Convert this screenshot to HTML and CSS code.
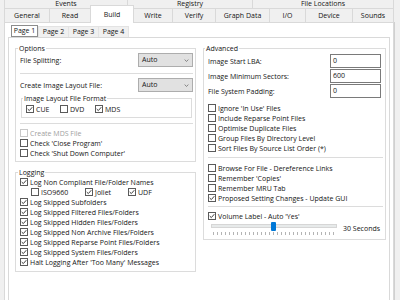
FILE: index.html
```html
<!DOCTYPE html>
<html>
<head>
<meta charset="utf-8">
<link rel="stylesheet" href="styles.css">
</head>
<body>
<div class="win">
  <div class="tabs1">
    <div class="t1 w-ev">Events</div>
    <div class="t1 w-reg">Registry</div>
    <div class="t1 w-fl">File Locations</div>
  </div>
  <div class="tabs2">
    <div class="t2 w-gen">General</div>
    <div class="t2 w-read">Read</div>
    <div class="t2 w-build sel">Build</div>
    <div class="t2 w-write">Write</div>
    <div class="t2 w-ver">Verify</div>
    <div class="t2 w-graph">Graph Data</div>
    <div class="t2 w-io">I/O</div>
    <div class="t2 w-dev">Device</div>
    <div class="t2 w-snd">Sounds</div>
  </div>
  <div class="panel">
    <div class="ptabs">
      <div class="pt psel">Page 1</div>
      <div class="pt">Page 2</div>
      <div class="pt">Page 3</div>
      <div class="pt">Page 4</div>
    </div>
    <div class="page">
      <div class="cols">
        <div class="col col-left">
          <fieldset class="grp">
            <legend>Options</legend>
            <div class="frow"><span>File Splitting:</span><div class="combo">Auto<svg class="chev" viewBox="0 0 6 4"><path d="M0.5 0.8 L3 3.2 L5.5 0.8"/></svg></div></div>
            <div class="sep"></div>
            <div class="frow"><span>Create Image Layout File:</span><div class="combo">Auto<svg class="chev" viewBox="0 0 6 4"><path d="M0.5 0.8 L3 3.2 L5.5 0.8"/></svg></div></div>
            <fieldset class="sub">
              <legend>Image Layout File Format</legend>
              <div class="cbrow">
                <div class="ck w-cue"><span class="cb"><svg viewBox="0 0 6 6"><path d="M0.7 3 L2.3 4.6 L5.3 1.2"/></svg></span>CUE</div>
                <div class="ck w-dvd"><span class="cb"></span>DVD</div>
                <div class="ck"><span class="cb"><svg viewBox="0 0 6 6"><path d="M0.7 3 L2.3 4.6 L5.3 1.2"/></svg></span>MDS</div>
              </div>
            </fieldset>
            <div class="sep sep2"></div>
            <div class="ck dis"><span class="cb"></span>Create MDS File</div>
            <div class="ck"><span class="cb"></span>Check 'Close Program'</div>
            <div class="ck"><span class="cb"></span>Check 'Shut Down Computer'</div>
          </fieldset>
          <fieldset class="grp log">
            <legend>Logging</legend>
            <div class="ck"><span class="cb"><svg viewBox="0 0 6 6"><path d="M0.7 3 L2.3 4.6 L5.3 1.2"/></svg></span>Log Non Compliant File/Folder Names</div>
            <div class="cbrow indent">
              <div class="ck w-iso"><span class="cb"></span>ISO9660</div>
              <div class="ck w-jol"><span class="cb"><svg viewBox="0 0 6 6"><path d="M0.7 3 L2.3 4.6 L5.3 1.2"/></svg></span>Joliet</div>
              <div class="ck"><span class="cb"><svg viewBox="0 0 6 6"><path d="M0.7 3 L2.3 4.6 L5.3 1.2"/></svg></span>UDF</div>
            </div>
            <div class="ck"><span class="cb"><svg viewBox="0 0 6 6"><path d="M0.7 3 L2.3 4.6 L5.3 1.2"/></svg></span>Log Skipped Subfolders</div>
            <div class="ck"><span class="cb"><svg viewBox="0 0 6 6"><path d="M0.7 3 L2.3 4.6 L5.3 1.2"/></svg></span>Log Skipped Filtered Files/Folders</div>
            <div class="ck"><span class="cb"><svg viewBox="0 0 6 6"><path d="M0.7 3 L2.3 4.6 L5.3 1.2"/></svg></span>Log Skipped Hidden Files/Folders</div>
            <div class="ck"><span class="cb"><svg viewBox="0 0 6 6"><path d="M0.7 3 L2.3 4.6 L5.3 1.2"/></svg></span>Log Skipped Non Archive Files/Folders</div>
            <div class="ck"><span class="cb"><svg viewBox="0 0 6 6"><path d="M0.7 3 L2.3 4.6 L5.3 1.2"/></svg></span>Log Skipped Reparse Point Files/Folders</div>
            <div class="ck"><span class="cb"><svg viewBox="0 0 6 6"><path d="M0.7 3 L2.3 4.6 L5.3 1.2"/></svg></span>Log Skipped System Files/Folders</div>
            <div class="ck"><span class="cb"><svg viewBox="0 0 6 6"><path d="M0.7 3 L2.3 4.6 L5.3 1.2"/></svg></span>Halt Logging After 'Too Many' Messages</div>
          </fieldset>
        </div>
        <div class="col col-right">
          <fieldset class="grp adv">
            <legend>Advanced</legend>
            <div class="irow"><span>Image Start LBA:</span><div class="inp">0</div></div>
            <div class="irow"><span>Image Minimum Sectors:</span><div class="inp">600</div></div>
            <div class="irow"><span>File System Padding:</span><div class="inp">0</div></div>
            <div class="ckgroup">
              <div class="ck"><span class="cb"></span>Ignore 'In Use' Files</div>
              <div class="ck"><span class="cb"></span>Include Reparse Point Files</div>
              <div class="ck"><span class="cb"></span>Optimise Duplicate Files</div>
              <div class="ck"><span class="cb"></span>Group Files By Directory Level</div>
              <div class="ck"><span class="cb"></span>Sort Files By Source List Order (*)</div>
            </div>
            <div class="sep sep3"></div>
            <div class="ck"><span class="cb"></span>Browse For File - Dereference Links</div>
            <div class="ck"><span class="cb"></span>Remember 'Copies'</div>
            <div class="ck"><span class="cb"></span>Remember MRU Tab</div>
            <div class="ck"><span class="cb"><svg viewBox="0 0 6 6"><path d="M0.7 3 L2.3 4.6 L5.3 1.2"/></svg></span>Proposed Setting Changes - Update GUI</div>
            <div class="sep sep4"></div>
            <div class="ck"><span class="cb"><svg viewBox="0 0 6 6"><path d="M0.7 3 L2.3 4.6 L5.3 1.2"/></svg></span>Volume Label - Auto 'Yes'</div>
            <div class="slrow">
              <div class="slider">
                <div class="track"></div>
                <div class="thumb"></div>
                <div class="ticks"></div>
              </div>
              <span class="secs">30 Seconds</span>
            </div>
          </fieldset>
        </div>
      </div>
    </div>
  </div>
  <div class="edge"></div>
</div>
</body>
</html>
```

FILE: styles.css
```css
* { box-sizing: border-box; }
html, body { margin: 0; padding: 0; }
body {
  width: 400px;
  height: 300px;
  overflow: hidden;
  background: #f0f0f0;
  font-family: "Open Sans", "Noto Sans", sans-serif;
  font-size: 7px;
  color: #141414;
}
.win { position: relative; width: 400px; height: 300px; overflow: hidden; }

/* top tab rows */
.tabs1 { display: flex; margin: -1px 0 -1px 4px; height: 10px; }
.t1 {
  height: 10px; border: 1px solid #d9d9d9; margin-right: -1px;
  background: #f0f0f0; text-align: center; line-height: 8px; white-space: nowrap;
}
.w-ev { width: 124px; }
.w-reg { width: 126px; }
.w-fl { width: 142px; }

.tabs2 { display: flex; align-items: flex-start; margin-left: 4px; height: 14px; }
.t2 {
  height: 14px; border: 1px solid #d9d9d9; border-bottom: none; margin-right: -1px;
  background: #f0f0f0; text-align: center; line-height: 13px; white-space: nowrap;
}
.t2.sel {
  position: relative; z-index: 2; background: #fff;
  height: 18px; margin-top: -3px; padding-top: 2px;
}
.w-gen { width: 46px; }
.w-read { width: 42px; }
.w-build { width: 44px; }
.w-write { width: 40px; }
.w-ver { width: 44px; }
.w-graph { width: 55px; }
.w-io { width: 37px; }
.w-dev { width: 48px; }
.w-snd { width: 42px; }

/* main panel */
.panel {
  margin-left: 4px; width: 390px; height: 290px;
  border: 1px solid #d9d9d9; border-bottom: none; background: #fff;
}
.ptabs { display: flex; align-items: flex-end; margin: 2px 0 0 6px; height: 12px; }
.pt {
  width: 31px; height: 11px; margin-right: -1px; border: 1px solid #e3e3e3; border-bottom: none;
  background: #f0f0f0; text-align: center; line-height: 10px; white-space: nowrap;
}
.pt.psel {
  width: 27px; height: 12px; border: 1px solid #8c8c8c; background: #fff; margin-right: 0;
}
.page {
  margin: 0 3px; height: 270px; border: 1px solid #d9d9d9; border-bottom: none; background: #fff;
}
.cols { display: flex; gap: 7px; padding: 6px 0 0 6px; }
.col-left { width: 181px; }
.col-right { width: 183px; }

fieldset { margin: 0; min-width: 0; }
.grp { border: 1px solid #dcdcdc; padding: 0 2px 3px 4px; }
legend { padding: 0 1px; margin-left: -2px; line-height: 9px; white-space: nowrap; }

.frow { display: flex; justify-content: space-between; align-items: center; height: 14px; }
.combo {
  position: relative; width: 55px; height: 14px; border: 1px solid #adadad; background: #e1e1e1;
  padding-left: 3px; line-height: 12px;
}
.chev {
  position: absolute; right: 3px; top: 5px; width: 5px; height: 3px;
  fill: none; stroke: #555; stroke-width: 0.9;
}
.sep { height: 1px; background: #dcdcdc; margin: 6px 0 4px 0; }
.sep2 { margin: 5px 0 0 0; }
.sub {
  border: 1px solid #dcdcdc; margin: 2px 1px 0 1px; padding: 1px 2px 3px 4px;
}
.sub legend { margin-left: -3px; }
.cbrow { display: flex; height: 10px; align-items: center; }
.indent { padding-left: 11px; }
.w-cue { width: 34px; }
.w-dvd { width: 35px; }
.w-iso { width: 54px; }
.w-jol { width: 43px; }

.ck { display: flex; align-items: center; height: 10px; white-space: nowrap; }
.cb {
  flex: none; display: flex; align-items: center; justify-content: center;
  width: 8px; height: 8px; border: 1px solid #5a5a5a; background: #fff; margin-right: 2px;
}
.cb svg { width: 6px; height: 6px; fill: none; stroke: #2a2a2a; stroke-width: 0.9; }
.dis { color: #a0a0a0; }
.dis .cb { border-color: #c8c8c8; }
.sep2 + .ck { margin-top: 4px; }

.log { margin-top: 6px; padding-bottom: 4px; }

.adv { padding-right: 2px; }
.adv legend { margin-left: -3px; }
.irow { display: flex; justify-content: space-between; align-items: center; height: 14px; margin-top: 1px; padding-right: 2px; }
.inp {
  width: 51px; height: 14px; border: 1px solid #7a7a7a; background: #fff;
  padding-left: 2px; line-height: 12px;
}
.ckgroup { margin-top: 5px; }
.sep3 { margin: 4px 0 5px 0; }
.sep4 { margin: 3px 0 4px 0; }

.slrow { display: flex; align-items: center; margin-left: 3px; height: 15px; }
.slider { position: relative; width: 126px; height: 15px; }
.track { margin-top: 3px; height: 4px; border: 1px solid #d6d6d6; background: #e7eaea; }
.thumb {
  position: absolute; left: 60px; top: 1px; width: 5px; height: 9px;
  background: #0078d7; border-radius: 1px;
}
.ticks {
  margin: 4px 2px 0 2px; height: 3px;
  background: repeating-linear-gradient(to right, #b4b4b4 0 1px, transparent 1px 4px);
}
.secs { margin-left: 6px; white-space: nowrap; }

.edge {
  position: absolute; top: 22px; right: 5px; width: 1px; height: 278px; background: #d0d0d0;
}
```
